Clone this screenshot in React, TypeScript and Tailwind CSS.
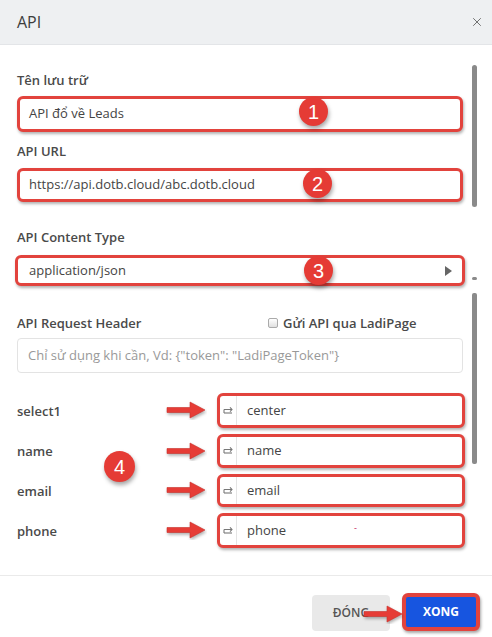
import { X } from 'lucide-react'

const ROWS = [
  { label: 'select1', value: 'center', h: 'h-[35px]' },
  { label: 'name', value: 'name', h: 'h-[34px]' },
  { label: 'email', value: 'email', h: 'h-[33px]' },
  { label: 'phone', value: 'phone', h: 'h-[35px]' },
]

function Badge({ n, className }: { n: number; className: string }) {
  return (
    <div
      className={`absolute w-[29px] h-[29px] rounded-full bg-[#e53b35] text-white text-[20px] leading-none flex items-center justify-center shadow-[1px_3px_4px_rgba(0,0,0,0.35)] ${className}`}
      style={{ fontFamily: '"Liberation Sans", Arial, sans-serif' }}
    >
      {n}
    </div>
  )
}

function RedArrow({ className = '' }: { className?: string }) {
  return (
    <svg width="42" height="20" viewBox="0 0 42 20" className={className}>
      <path
        d="M2 7.5 H25 V2 L40 10 L25 18 V12.5 H2 Z"
        fill="#e63c36"
        stroke="#c9302b"
        strokeWidth="0.6"
        strokeLinejoin="round"
        style={{ filter: 'drop-shadow(1px 2px 1.5px rgba(0,0,0,0.3))' }}
      />
    </svg>
  )
}

function SwapIcon() {
  return (
    <svg width="11" height="10" viewBox="0 0 11 10" fill="none" stroke="#777" strokeWidth="1.1">
      <path d="M1 3.5 H9 M7 1.3 L9 3.5 L7 5.7" />
      <path d="M1 7 H9" />
      <path d="M1 3.5 V7" />
    </svg>
  )
}

const redBox =
  'border-[3px] border-[#e2433d] rounded-[6px] bg-white shadow-[1px_2px_3px_rgba(0,0,0,0.3)]'

const labelCls = 'text-[13px] font-semibold text-[#4a4a4a] leading-[18px]'

export default function App() {
  return (
    <div
      className="relative w-[492px] h-[637px] bg-white flex flex-col overflow-hidden text-[#333]"
      style={{ fontFamily: '"Open Sans", "Noto Sans", sans-serif' }}
    >
      {/* Header */}
      <div className="h-[45px] shrink-0 flex items-center justify-between pl-[17px] pr-[8px] bg-[#eef0f2] border-b border-[#e3e5e8]">
        <span className="text-[16px] text-[#3d3d3d]">API</span>
        <X size={14} strokeWidth={1.4} className="text-[#555]" />
      </div>

      {/* Body */}
      <div className="flex-1 flex flex-col pl-[17px] pr-[29px] pt-[26px]">
        <label className={labelCls}>Tên lưu trữ</label>
        <div className={`mt-[7px] h-[36px] flex items-center pl-[9px] text-[13px] text-[#444] ${redBox}`}>
          API đổ về Leads
        </div>

        <label className={`mt-[10px] ${labelCls}`}>API URL</label>
        <div className={`mt-[8px] h-[34px] flex items-center pl-[9px] text-[13px] text-[#444] ${redBox}`}>
          https://api.dotb.cloud/abc.dotb.cloud
        </div>

        <label className={`mt-[26px] ${labelCls}`}>API Content Type</label>
        <div className={`mt-[9px] -mx-[2px] h-[31px] flex items-center justify-between pl-[11px] pr-[10px] text-[13px] text-[#444] ${redBox}`}>
          <span>application/json</span>
          <span className="w-0 h-0 border-y-[5px] border-y-transparent border-l-[7px] border-l-[#666]" />
        </div>

        <div className="mt-[28px] h-[18px] flex items-center">
          <span className={`w-[251px] ${labelCls}`}>API Request Header</span>
          <span className="w-[10px] h-[10px] border border-[#aaa] rounded-[2px] bg-gradient-to-b from-white to-[#e0e0e0]" />
          <span className={`ml-[5px] ${labelCls}`}>Gửi API qua LadiPage</span>
        </div>
        <div className="mt-[6px] h-[35px] flex items-center pl-[10px] border border-[#e3e3e3] rounded-[4px] text-[13px] text-[#999]">
          Chỉ sử dụng khi cần, Vd: {'{"token": "LadiPageToken"}'}
        </div>

        <div className="mt-[20px] flex flex-col gap-[6px]">
          {ROWS.map((r) => (
            <div key={r.label} className="flex items-center">
              <span className={`w-[148px] ${labelCls}`}>{r.label}</span>
              <RedArrow className="-mt-[1px]" />
              <div className={`ml-[10px] flex-1 -mr-[2px] ${r.h} flex items-center ${redBox}`}>
                <div className="w-[14px] flex justify-center ml-[1px]">
                  <SwapIcon />
                </div>
                <div className="self-stretch w-px bg-[#e5e5e5] ml-[1px]" />
                <span className="ml-[10px] text-[13px] text-[#444]">{r.value}</span>
                {r.label === 'phone' && <span className="ml-[68px] -mt-[6px] text-[9px] text-[#c2185b]">-</span>}
              </div>
            </div>
          ))}
        </div>
      </div>

      {/* Footer */}
      <div className="h-[62px] shrink-0 border-t border-[#eaeaea] flex items-center justify-end pr-[12px] gap-[12px]">
        <div className="w-[78px] h-[36px] mt-[13px] rounded-[4px] bg-[#e9e9e9] text-[12px] font-semibold text-[#555] flex items-center justify-center">
          ĐÓNG
        </div>
        <div className="mt-[11px] w-[78px] h-[38px] rounded-[6px] border-[4px] border-[#e2433d] shadow-[1px_2px_3px_rgba(0,0,0,0.35)] bg-[#1755e0] text-white text-[12px] font-bold flex items-center justify-center">
          XONG
        </div>
      </div>

      {/* Scrollbars */}
      <div className="absolute left-[472px] top-[65px] w-[5px] h-[142px] rounded-full bg-[#8a8a8a]" />
      <div className="absolute left-[472px] top-[277px] w-[5px] h-[3px] rounded-full bg-[#8a8a8a]" />
      <div className="absolute left-[472px] top-[293px] w-[5px] h-[171px] rounded-[2px] bg-[#8a8a8a]" />

      {/* Annotation badges */}
      <Badge n={1} className="left-[299px] top-[97px]" />
      <Badge n={2} className="left-[303px] top-[169px]" />
      <Badge n={3} className="left-[304px] top-[256px]" />
      <Badge n={4} className="left-[104px] top-[451px] w-[31px] h-[31px]" />
      <RedArrow className="absolute left-[362px] top-[604px]" />
    </div>
  )
}
